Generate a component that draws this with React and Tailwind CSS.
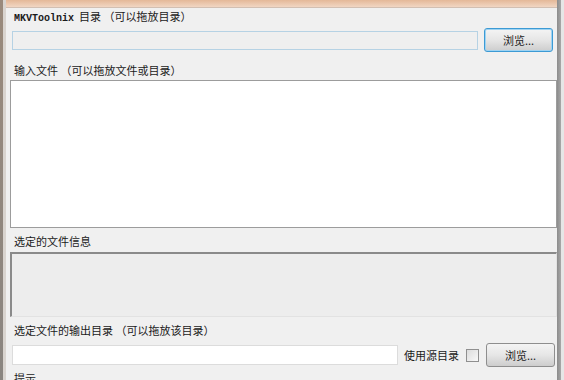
import React from 'react';

const cjk = { fontFamily: '"Noto Sans CJK SC", "Liberation Sans", sans-serif' };

function Btn({ focused }) {
  return (
    <button
      className={
        focused
          ? 'shrink-0 w-[69px] h-[24px] rounded-[3px] border border-[#3c9ad4] shadow-[0_0_0_1px_#9fd3f2_inset] bg-gradient-to-b from-[#f4f4f4] via-[#e6e6e6] to-[#cdcdcd] text-[11px] text-[#222] leading-none'
          : 'shrink-0 w-[69px] h-[24px] rounded-[3px] border border-[#8e8e8e] bg-gradient-to-b from-[#f4f4f4] via-[#e6e6e6] to-[#cdcdcd] text-[11px] text-[#222] leading-none'
      }
      style={cjk}
    >
      浏览...
    </button>
  );
}

export default function App() {
  return (
    <div className="w-[564px] h-[380px] overflow-hidden flex bg-[#f0f0f0] text-[11px] text-[#1a1a1a]" style={cjk}>
      <div className="shrink-0 w-[3px] bg-gradient-to-b from-[#9a8a7c] to-[#8a8580]" />
      <div className="shrink-0 w-[3px] bg-[#d9d4cf]" />
      <div className="flex-1 flex flex-col min-w-0">
        <div className="shrink-0 h-[8px] bg-gradient-to-b from-[#e4b898] to-[#f1d6c3] border-b border-[#d2bfb2]" />
        <div className="flex flex-col pl-[4px]">
          <div className="shrink-0 h-[20px] pt-[1px] pl-[4px] leading-[14px] whitespace-nowrap">
            <span className="font-bold" style={{ fontFamily: '"Liberation Mono", monospace', fontSize: 10 }}>MKVToolnix</span>
            <span className="ml-[5px]">目录 （可以拖放目录）</span>
          </div>
          <div className="shrink-0 h-[24px] flex items-center pl-[2px] pr-[4px]">
            <div className="shrink-0 w-[466px] h-[19px] border border-[#b6d2e4] bg-[#efefef]" />
            <div className="ml-[6px]"><Btn focused /></div>
          </div>
          <div className="shrink-0 h-[28px] pt-[11px] pl-[4px] leading-[14px] whitespace-nowrap">输入文件 （可以拖放文件或目录）</div>
          <div className="shrink-0 h-[148px] bg-white border border-[#9c9c9c]" />
          <div className="shrink-0 h-[24px] pt-[6px] pl-[4px] leading-[14px]">选定的文件信息</div>
          <div className="shrink-0 h-[65px] border-t-2 border-l-2 border-[#8a8a8a] border-r border-b border-r-[#e2e2e2] border-b-[#e2e2e2] bg-[#ededed]" />
          <div className="shrink-0 h-[26px] pt-[6px] pl-[4px] leading-[14px] whitespace-nowrap">选定文件的输出目录 （可以拖放该目录）</div>
          <div className="shrink-0 h-[24px] flex items-center pl-[2px] pr-[4px] whitespace-nowrap">
            <div className="shrink-0 w-[386px] h-[20px] border border-[#dcdcdc] bg-white" />
            <span className="ml-[6px] shrink-0">使用源目录</span>
            <div className="shrink-0 ml-[7px] w-[13px] h-[13px] border border-[#8f8f8f] bg-gradient-to-br from-[#dcdcdc] to-[#f8f8f8]" />
            <div className="ml-[7px]"><Btn /></div>
          </div>
          <div className="shrink-0 pt-[4px] pl-[4px] leading-[14px]">提示</div>
        </div>
      </div>
      <div className="shrink-0 w-[4px] bg-gradient-to-r from-[#8c8c8c] to-[#a8a8a8]" />
      <div className="shrink-0 w-[3px] bg-[#e6e6e6]" />
    </div>
  );
}
